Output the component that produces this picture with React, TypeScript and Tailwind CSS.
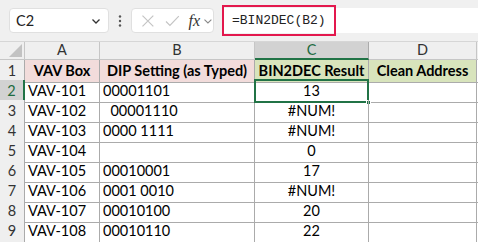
import React from "react";

const cols = ["A", "B", "C", "D"];

const rows: [string, string, string][] = [
  ["VAV-101", "00001101", "13"],
  ["VAV-102", "\u00a0\u00a000001110", "#NUM!"],
  ["VAV-103", "0000 1111", "#NUM!"],
  ["VAV-104", "", "0"],
  ["VAV-105", "00010001", "17"],
  ["VAV-106", "0001 0010", "#NUM!"],
  ["VAV-107", "00010100", "20"],
  ["VAV-108", "00010110", "22"],
];

const grid = "grid grid-cols-[25px_75px_155px_114px_108px_1fr]";
const line = "border-r border-b border-[#ababab]";

function Toolbar() {
  return (
    <div className="flex h-[42px] items-center bg-[#f0f0f0] pl-[9px] border-b border-[#d6d6d6]">
      <div className="flex h-[25px] w-[100px] items-center justify-between rounded-[4px] border border-[#e0e0e0] bg-white pl-[6px] pr-[6px] text-[14.5px] text-[#222]">
        <span>C2</span>
        <svg width="12" height="12" viewBox="0 0 12 12">
          <path d="M2.5 4.5 L6 8 L9.5 4.5" fill="none" stroke="#333" strokeWidth="1.3" />
        </svg>
      </div>
      <div className="flex w-[22px] justify-center">
        <svg width="4" height="14" viewBox="0 0 4 14">
          <circle cx="2" cy="2.5" r="1.2" fill="#555" />
          <circle cx="2" cy="7" r="1.2" fill="#555" />
          <circle cx="2" cy="11.5" r="1.2" fill="#555" />
        </svg>
      </div>
      <div className="flex h-[25px] w-[83px] items-center rounded-[4px] border border-[#e0e0e0] bg-white pl-[9px]">
        <svg width="14" height="14" viewBox="0 0 14 14">
          <path d="M1.5 1.5 L12.5 12.5 M12.5 1.5 L1.5 12.5" stroke="#c4c4c4" strokeWidth="1.2" />
        </svg>
        <svg className="ml-[10px]" width="15" height="14" viewBox="0 0 15 14">
          <path d="M1 7.5 L5 11.5 L14 2" fill="none" stroke="#c4c4c4" strokeWidth="1.2" />
        </svg>
        <span className="ml-[9px] font-['Liberation_Serif',serif] text-[16px] italic text-[#333]">fx</span>
        <svg className="ml-[3px]" width="10" height="10" viewBox="0 0 10 10">
          <path d="M1.5 3.5 L5 7 L8.5 3.5" fill="none" stroke="#888" strokeWidth="1.1" />
        </svg>
      </div>
      <div className="ml-[8px] flex h-[25px] flex-1 items-center bg-white">
        <div className="flex h-[31px] w-[114px] items-center border-2 border-[#e3184d] pl-[8px] font-['Liberation_Mono',monospace] text-[13px] text-[#222]">
          =BIN2DEC(B2)
        </div>
      </div>
    </div>
  );
}

export default function App() {
  return (
    <div className="h-[242px] w-[478px] overflow-hidden bg-white font-['Lato','Open_Sans',sans-serif] text-[14.5px] text-black">
      <Toolbar />
      <div className={`${grid} h-[18px] bg-[#efefef] text-[#333]`}>
        <div className="relative border-r border-b border-[#c6c6c6]">
          <svg className="absolute bottom-[2px] right-[2px]" width="13" height="13" viewBox="0 0 13 13">
            <path d="M13 0 L13 13 L0 13 Z" fill="#c2c2c2" />
          </svg>
        </div>
        {cols.map((c) =>
          c === "C" ? (
            <div key={c} className="flex items-center justify-center border-r border-[#ababab] border-b-2 border-b-[#217346] bg-[#d2d2d2] leading-none text-[#1e6b41]">
              {c}
            </div>
          ) : (
            <div key={c} className="flex items-center justify-center border-r border-b border-[#c6c6c6] leading-none">
              {c}
            </div>
          )
        )}
        <div className="border-b border-[#c6c6c6]" />
      </div>
      <div className={`${grid} h-[20px]`}>
        <div className={`flex items-center justify-center bg-[#efefef] text-[#333] ${line}`}>1</div>
        <div className={`flex items-center justify-center bg-[#f2dcdb] font-bold ${line}`}>VAV Box</div>
        <div className={`flex items-center justify-center bg-[#f2dcdb] font-bold ${line}`}>DIP Setting (as Typed)</div>
        <div className={`flex items-center justify-center bg-[#d8e4bc] font-bold ${line}`}>BIN2DEC Result</div>
        <div className={`flex items-center justify-center bg-[#d8e4bc] font-bold ${line}`}>Clean Address</div>
        <div className="border-b border-[#ababab]" />
      </div>
      {rows.map(([a, b, c], i) => {
        const sel = i === 0;
        return (
          <div key={a} className={`${grid} h-[20px]`}>
            <div
              className={
                sel
                  ? "flex items-center justify-center border-b border-[#ababab] border-r-2 border-r-[#217346] bg-[#d2d2d2] text-[#1e6b41]"
                  : `flex items-center justify-center bg-[#efefef] text-[#333] ${line}`
              }
            >
              {i + 2}
            </div>
            <div className={`flex items-center whitespace-pre pl-[3px] ${line}`}>{a}</div>
            <div className={`flex items-center whitespace-pre pl-[3px] ${line}`}>{b}</div>
            <div className={`relative flex items-center justify-center ${line}`}>
              {c}
              {sel && (
                <>
                  <div className="absolute -left-px -top-px bottom-[-1px] right-[-1px] border-2 border-[#217346]" />
                  <div className="absolute bottom-[-3px] right-[-3px] h-[5px] w-[5px] border border-white bg-[#217346]" />
                </>
              )}
            </div>
            <div className={line} />
            <div className="border-b border-[#ababab]" />
          </div>
        );
      })}
    </div>
  );
}
